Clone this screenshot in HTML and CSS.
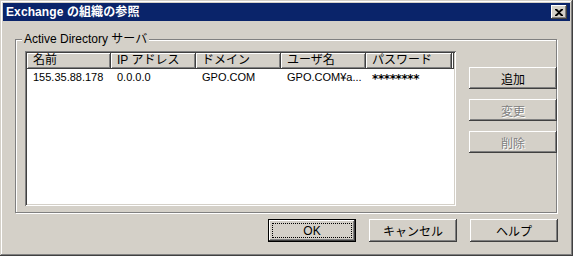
FILE: index.html
```html
<!DOCTYPE html>
<html lang="ja">
<head>
<meta charset="utf-8">
<link rel="stylesheet" href="styles.css">
</head>
<body>
<div class="window">
  <div class="titlebar">
    <span class="title">Exchange の組織の参照</span>
    <span class="close"><svg width="8" height="7" viewBox="0 0 8 7"><path d="M0 0h2l2 2 2-2h2v1L5 3.5 8 6v1H6L4 5 2 7H0V6l3-2.5L0 1z" fill="#000"/></svg></span>
  </div>
  <div class="main">
    <div class="group">
      <span class="legend">Active Directory サーバ</span>
      <div class="list">
        <div class="header">
          <div class="hcell c1">名前</div>
          <div class="hcell c2">IP アドレス</div>
          <div class="hcell c3">ドメイン</div>
          <div class="hcell c4">ユーザ名</div>
          <div class="hcell c5">パスワード</div>
          <div class="hcell c6"></div>
        </div>
        <div class="row">
          <div class="cell c1">155.35.88.178</div>
          <div class="cell c2">0.0.0.0</div>
          <div class="cell c3">GPO.COM</div>
          <div class="cell c4">GPO.COM¥a...</div>
          <div class="cell c5 stars">********</div>
        </div>
      </div>
      <div class="side">
        <button class="btn">追加</button>
        <button class="btn disabled">変更</button>
        <button class="btn disabled">削除</button>
      </div>
    </div>
    <div class="actions">
      <button class="btn default"><span class="focus">OK</span></button>
      <button class="btn">キャンセル</button>
      <button class="btn">ヘルプ</button>
    </div>
  </div>
</div>
</body>
</html>
```
FILE: styles.css
```css
html, body {
  margin: 0;
  padding: 0;
  background: #d4d0c8;
}
body {
  font-family: "Liberation Sans", "Noto Sans CJK JP", sans-serif;
  font-size: 12px;
  color: #000;
}
.window {
  width: 573px;
  height: 256px;
  box-sizing: border-box;
  padding: 3px;
  background: #d4d0c8;
  box-shadow: inset -1px -1px #404040, inset 1px 1px #d4d0c8, inset -2px -2px #808080, inset 2px 2px #fff;
  display: flex;
  flex-direction: column;
}
.titlebar {
  height: 18px;
  background: #0a246a;
  display: flex;
  align-items: center;
  justify-content: space-between;
  padding: 0 3px 0 3px;
}
.title {
  color: #fff;
  font-weight: bold;
  font-size: 12px;
  line-height: 18px;
  letter-spacing: 0.1px;
}
.close {
  width: 16px;
  height: 14px;
  box-sizing: border-box;
  background: #d4d0c8;
  box-shadow: inset -1px -1px #404040, inset 1px 1px #fff, inset -2px -2px #808080;
  display: flex;
  align-items: center;
  justify-content: center;
  padding-right: 1px;
}
.main {
  padding: 18px 13px 0 12px;
  display: flex;
  flex-direction: column;
}
.group {
  position: relative;
  height: 174px;
  box-sizing: border-box;
  border: 1px solid #808080;
  box-shadow: inset 1px 1px #fff, 1px 1px #fff;
  padding: 11px 0 0 9px;
  display: flex;
  align-items: flex-start;
}
.legend {
  position: absolute;
  left: 6px;
  top: -8px;
  background: #d4d0c8;
  padding: 0 2px;
  line-height: 14px;
}
.list {
  width: 431px;
  height: 155px;
  box-sizing: border-box;
  background: #fff;
  padding: 2px;
  box-shadow: inset 1px 1px #808080, inset -1px -1px #fff, inset 2px 2px #404040, inset -2px -2px #d4d0c8;
  flex: none;
}
.header {
  display: flex;
  height: 16px;
}
.hcell {
  box-sizing: border-box;
  height: 16px;
  background: #d4d0c8;
  box-shadow: inset -1px -1px #404040, inset 1px 1px #fff, inset -2px -2px #808080;
  padding-left: 6px;
  line-height: 15px;
  white-space: nowrap;
  overflow: hidden;
}
.c1 { width: 84px; }
.c2 { width: 85px; }
.c3 { width: 85px; }
.c4 { width: 85px; }
.c5 { width: 86px; }
.c6 { flex: 1; padding: 0; }
.row {
  display: flex;
  height: 13px;
  margin-top: 2px;
  line-height: 13px;
  font-size: 11px;
}
.cell {
  box-sizing: border-box;
  padding-left: 6px;
  white-space: nowrap;
  overflow: hidden;
}
.stars {
  font-family: "DejaVu Sans", sans-serif;
  font-size: 12px;
  font-weight: bold;
  letter-spacing: -0.4px;
  line-height: 13px;
  padding-top: 2px;
  height: 15px;
}
.side {
  margin-left: 13px;
  margin-top: 16px;
  display: flex;
  flex-direction: column;
  gap: 10px;
}
.btn {
  font: inherit;
  color: #000;
  width: 88px;
  height: 22px;
  padding: 0;
  border: 0;
  background: #d4d0c8;
  box-shadow: inset -1px -1px #404040, inset 1px 1px #fff, inset -2px -2px #808080, inset 2px 2px #d4d0c8;
  display: flex;
  align-items: center;
  justify-content: center;
}
.disabled {
  color: #808080;
  text-shadow: 1px 1px #fff;
}
.actions {
  display: flex;
  justify-content: flex-end;
  gap: 13px;
  margin-top: 6px;
  margin-right: -1px;
}
.actions .btn {
  height: 23px;
}
.btn.default {
  box-shadow: inset 0 0 0 1px #000, inset -2px -2px #404040, inset 2px 2px #fff, inset -3px -3px #808080;
  padding: 4px;
}
.focus {
  flex: 1;
  align-self: stretch;
  outline: 1px dotted #000;
  outline-offset: -1px;
  display: flex;
  align-items: center;
  justify-content: center;
}
```
